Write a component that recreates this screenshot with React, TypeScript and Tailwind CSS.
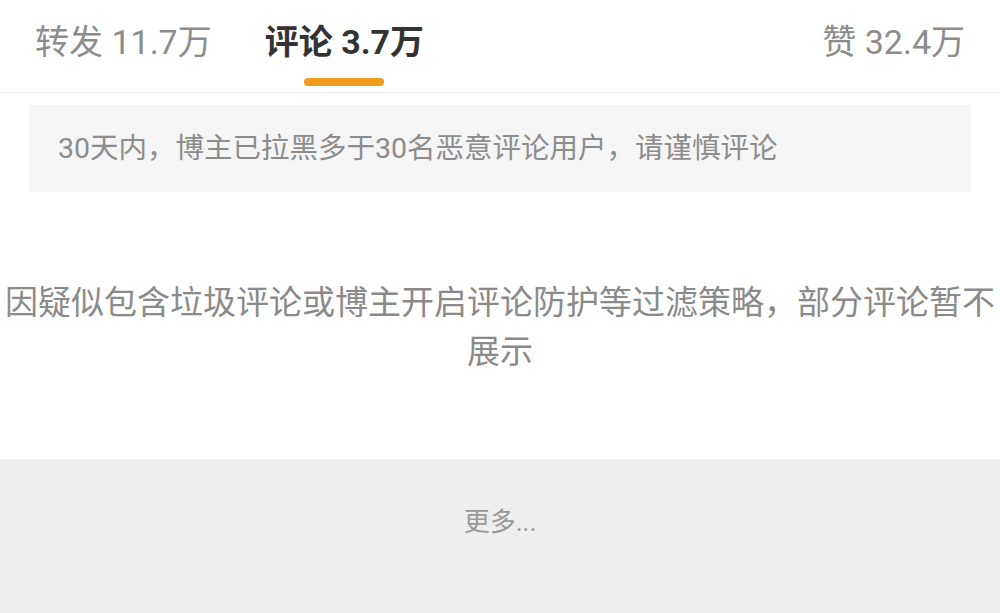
export default function App() {
  const font = { fontFamily: 'Roboto, "Noto Sans CJK SC", sans-serif' };
  return (
    <div className="w-[1000px] h-[613px] overflow-hidden bg-white flex flex-col" style={font}>
      <div className="h-[93px] flex items-start px-[35px] border-b border-[#eeeeee] shrink-0">
        <div className="flex flex-col items-center">
          <span className="mt-[20px] text-[34px] leading-[44px] text-[#8c8c8c] whitespace-nowrap">转发 11.7万</span>
        </div>
        <div className="flex flex-col items-center ml-[53px]">
          <span className="mt-[20px] text-[34px] leading-[44px] font-bold text-[#333333] whitespace-nowrap">评论 3.7万</span>
          <span className="mt-[14px] w-[80px] h-[8px] rounded-full bg-[#f09c1c]" />
        </div>
        <div className="flex flex-col items-center ml-auto">
          <span className="mt-[20px] text-[34px] leading-[44px] text-[#8c8c8c] whitespace-nowrap">赞 32.4万</span>
        </div>
      </div>

      <div className="mt-[12px] mx-[29px] h-[87px] bg-[#f5f5f5] flex items-center px-[29px] shrink-0">
        <p className="text-[28.5px] leading-[36px] text-[#8c8c8c]">30天内，博主已拉黑多于30名恶意评论用户，请谨慎评论</p>
      </div>

      <div className="h-[267px] pt-[86px] shrink-0">
        <p className="text-[33px] leading-[49px] text-[#8a8a8a] text-center">
          因疑似包含垃圾评论或博主开启评论防护等过滤策略，部分评论暂不展示
        </p>
      </div>

      <div className="flex-1 bg-[#eeeeee] pt-[45px] flex justify-center">
        <span className="text-[26px] leading-[36px] text-[#999999]">更多...</span>
      </div>
    </div>
  );
}
